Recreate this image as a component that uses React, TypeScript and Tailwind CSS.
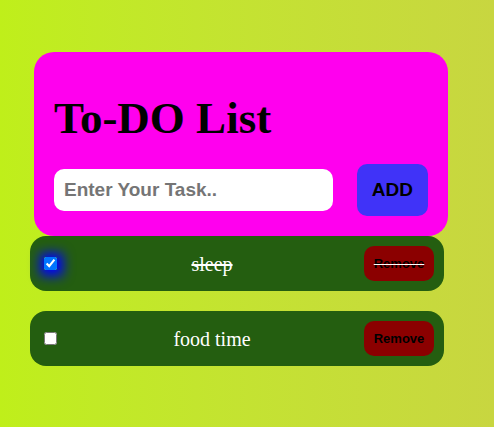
import { useState } from "react";
import type { FormEvent } from "react";

type Task = { id: number; title: string; done: boolean };

const initialTasks: Task[] = [
  { id: 1, title: "sleep", done: true },
  { id: 2, title: "food time", done: false },
];

type TaskRowProps = {
  task: Task;
  onToggle: () => void;
  onRemove: () => void;
};

function TaskRow({ task, onToggle, onRemove }: TaskRowProps) {
  const strike = task.done ? "line-through decoration-white" : "";
  const glow = task.done ? "shadow-[1px_1px_12px_5px_#0000ff]" : "";
  return (
    <li className="flex items-center justify-between rounded-2xl bg-[#245e10] p-[10px] text-xl text-white">
      <input
        id={`task-${task.id}`}
        type="checkbox"
        checked={task.done}
        onChange={onToggle}
        className={`mr-[3px] ml-1 size-[13px] ${glow}`}
      />
      <label htmlFor={`task-${task.id}`} className={`${strike} decoration-2`}>
        {task.title}
      </label>
      <button
        type="button"
        onClick={onRemove}
        className={`w-[70px] rounded-[10px] bg-[#8b0000] py-[10px] text-center font-['Liberation_Sans',Arial,sans-serif] text-[13px] leading-[15px] font-bold text-black ${strike} decoration-1`}
      >
        Remove
      </button>
    </li>
  );
}

export default function App() {
  const [tasks, setTasks] = useState<Task[]>(initialTasks);
  const [draft, setDraft] = useState("");

  const addTask = (event: FormEvent) => {
    event.preventDefault();
    const title = draft.trim();
    if (!title) return;
    setTasks([...tasks, { id: Date.now(), title, done: false }]);
    setDraft("");
  };

  return (
    <main className="min-h-screen bg-linear-to-r from-[#bfef1a] to-[#c8d640] pt-[52px] pr-[46px] pb-10 pl-[30px] font-['Liberation_Serif','Times_New_Roman',serif]">
      <section className="ml-1 rounded-[20px] bg-[#ff00ee] p-5">
        <h1 className="py-5 text-[45px] leading-[52px] font-bold text-black">To-DO List</h1>
        <form
          onSubmit={addTask}
          className="flex items-center gap-6 font-['Liberation_Sans',Arial,sans-serif] text-[19px] leading-[22px] font-bold"
        >
          <input
            type="text"
            aria-label="New task"
            placeholder="Enter Your Task.."
            value={draft}
            onChange={(event) => setDraft(event.target.value)}
            className="min-w-0 flex-1 rounded-[10px] bg-white p-[10px] text-black placeholder:text-[#757575]"
          />
          <button type="submit" className="rounded-[10px] bg-[#4033f8] p-[15px] text-black">
            ADD
          </button>
        </form>
      </section>
      <ul className="mr-1 flex flex-col gap-5">
        {tasks.map((task) => (
          <TaskRow
            key={task.id}
            task={task}
            onToggle={() =>
              setTasks(tasks.map((t) => (t.id === task.id ? { ...t, done: !t.done } : t)))
            }
            onRemove={() => setTasks(tasks.filter((t) => t.id !== task.id))}
          />
        ))}
      </ul>
    </main>
  );
}
